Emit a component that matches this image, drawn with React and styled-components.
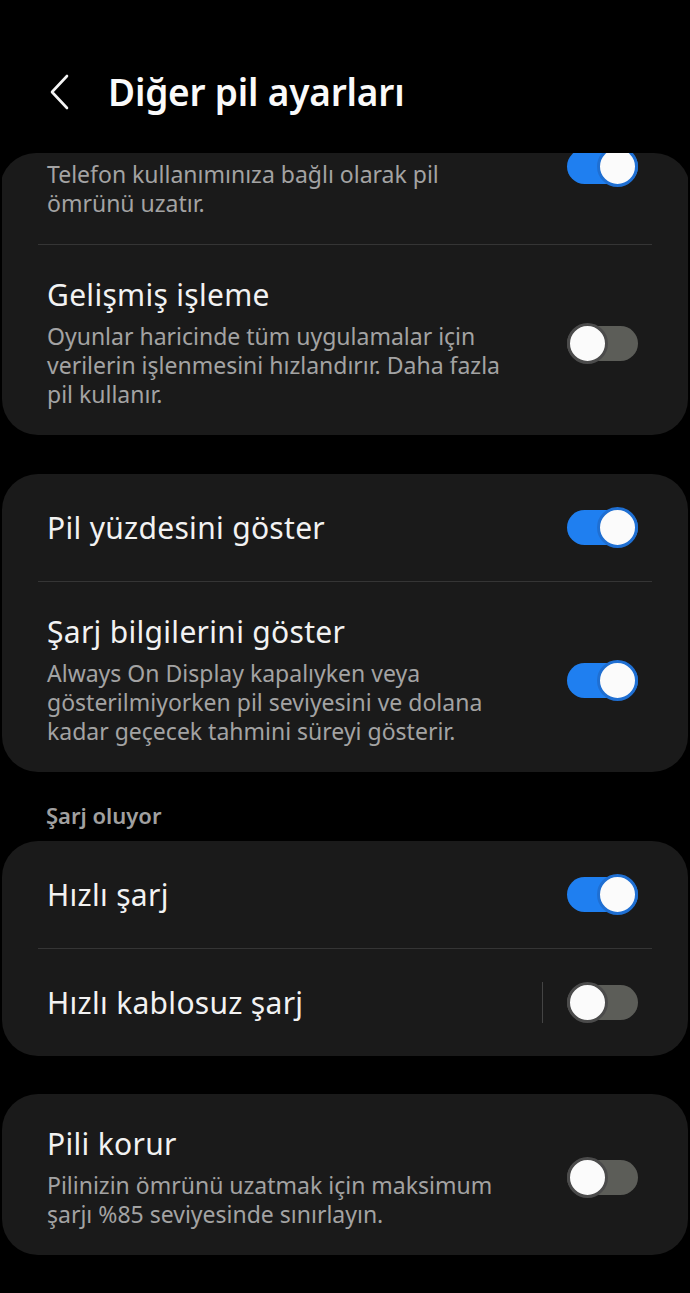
import styled, { createGlobalStyle } from 'styled-components';

const GlobalStyle = createGlobalStyle`
    html, body {
        margin: 0;
        padding: 0;
        background: #000;
    }
    body {
        font-family: "Noto Sans", "Open Sans", sans-serif;
        color: #f2f2f2;
    }
`

const Screen = styled.div`
    width: 690px;
    height: 1293px;
    background: #000;
    overflow: hidden;
    display: flex;
    flex-direction: column;
`

const Header = styled.header`
    height: 153px;
    flex-shrink: 0;
    display: flex;
    align-items: center;
    padding: 30px 0 0 44px;
    box-sizing: border-box;
`

const BackButton = styled.button`
    width: 30px;
    height: 40px;
    padding: 0;
    border: none;
    background: none;
    display: flex;
    align-items: center;
    justify-content: center;
    margin-right: 34px;
`

const Title = styled.h1`
    margin: 0;
    font-size: 37px;
    line-height: 44px;
    font-weight: 600;
    color: #fafafa;
    letter-spacing: -0.2px;
`

const Viewport = styled.div`
    flex: 1;
    overflow: hidden;
    border-radius: 36px 36px 0 0;
`

const List = styled.div`
    margin-top: ${({ $offset }) => -$offset}px;
    display: flex;
    flex-direction: column;
`

const Card = styled.section`
    background: #1a1a1a;
    border-radius: 36px;
    margin: 0 2px ${({ $gap }) => $gap}px;
    overflow: hidden;
`

const Row = styled.div`
    display: flex;
    align-items: center;
    min-height: 107px;
    padding: ${({ $multi }) => ($multi ? '32px 50px 26px 45px' : '0 50px 0 45px')};
    box-sizing: border-box;
`

const Divider = styled.div`
    height: 1px;
    background: #353535;
    margin: 0 36px;
`

const TextBlock = styled.div`
    display: flex;
    flex-direction: column;
    gap: 9px;
`

const RowTitle = styled.div`
    font-size: 30px;
    line-height: 36px;
    letter-spacing: 0.3px;
    color: #f2f2f2;
    white-space: nowrap;
`

const RowDesc = styled.div`
    font-size: 23px;
    line-height: 29px;
    color: #a3a3a3;
`

const DescLine = styled.span`
    display: block;
    white-space: nowrap;
`

const Controls = styled.div`
    margin-left: auto;
    display: flex;
    align-items: center;
`

const VSeparator = styled.div`
    width: 1px;
    height: 41px;
    background: #444;
    margin-right: 24px;
`

const Track = styled.div`
    width: 71px;
    height: 35px;
    border-radius: 18px;
    background: ${({ $on }) => ($on ? '#1f7ff0' : '#5c5d58')};
    display: flex;
    align-items: center;
    justify-content: ${({ $on }) => ($on ? 'flex-end' : 'flex-start')};
`

const Thumb = styled.div`
    width: 41px;
    height: 41px;
    flex-shrink: 0;
    box-sizing: border-box;
    border-radius: 50%;
    background: #fbfbfb;
    border: 3px solid ${({ $on }) => ($on ? '#1f6fd2' : '#4b4b4b')};
`

const SectionLabel = styled.div`
    font-size: 22px;
    line-height: 30px;
    font-weight: 600;
    color: #a0a0a0;
    padding: 28px 46px 11px;
`

const Spacer = styled.div`
    height: 40px;
`

const Switch = ({ on }) => (
    <Track $on={on}>
        <Thumb $on={on} />
    </Track>
)

const ChevronLeft = () => (
    <svg width="22" height="36" viewBox="0 0 22 36" fill="none">
        <path d="M19 2 L4 18 L19 34" stroke="#f5f5f5" strokeWidth="2.6" strokeLinecap="round" strokeLinejoin="round" />
    </svg>
)

const Setting = ({ title, desc, on, separator }) => (
    <Row $multi={!!desc}>
        <TextBlock>
            <RowTitle>{title}</RowTitle>
            {desc && (
                <RowDesc>
                    {desc.map((line) => (
                        <DescLine key={line}>{line}</DescLine>
                    ))}
                </RowDesc>
            )}
        </TextBlock>
        <Controls>
            {separator && <VSeparator />}
            <Switch on={on} />
        </Controls>
    </Row>
)

const SettingsGroup = ({ items, gap }) => (
    <Card $gap={gap}>
        {items.map((item, i) => (
            <div key={item.title}>
                {i > 0 && <Divider />}
                <Setting {...item} />
            </div>
        ))}
    </Card>
)

const battery = [
    {
        title: 'Uyarlanabilir pil',
        desc: ['Telefon kullanımınıza bağlı olarak pil', 'ömrünü uzatır.'],
        on: true,
    },
    {
        title: 'Gelişmiş işleme',
        desc: ['Oyunlar haricinde tüm uygulamalar için', 'verilerin işlenmesini hızlandırır. Daha fazla', 'pil kullanır.'],
        on: false,
    },
]

const display = [
    { title: 'Pil yüzdesini göster', on: true },
    {
        title: 'Şarj bilgilerini göster',
        desc: ['Always On Display kapalıyken veya', 'gösterilmiyorken pil seviyesini ve dolana', 'kadar geçecek tahmini süreyi gösterir.'],
        on: true,
    },
]

const charging = [
    { title: 'Hızlı şarj', on: true },
    { title: 'Hızlı kablosuz şarj', on: false, separator: true },
]

const protect = [
    {
        title: 'Pili korur',
        desc: ['Pilinizin ömrünü uzatmak için maksimum', 'şarjı %85 seviyesinde sınırlayın.'],
        on: false,
    },
]

const App = () => {
    return (
        <Screen>
            <GlobalStyle />
            <Header>
                <BackButton aria-label="Geri">
                    <ChevronLeft />
                </BackButton>
                <Title>Diğer pil ayarları</Title>
            </Header>
            <Viewport>
                {/* list is scrolled a little, first title sits above the fold */}
                <List $offset={70}>
                    <SettingsGroup items={battery} gap={39} />
                    <SettingsGroup items={display} gap={0} />
                    <SectionLabel>Şarj oluyor</SectionLabel>
                    <SettingsGroup items={charging} gap={38} />
                    <SettingsGroup items={protect} gap={40} />
                    <Spacer />
                </List>
            </Viewport>
        </Screen>
    );
};

export default App;
